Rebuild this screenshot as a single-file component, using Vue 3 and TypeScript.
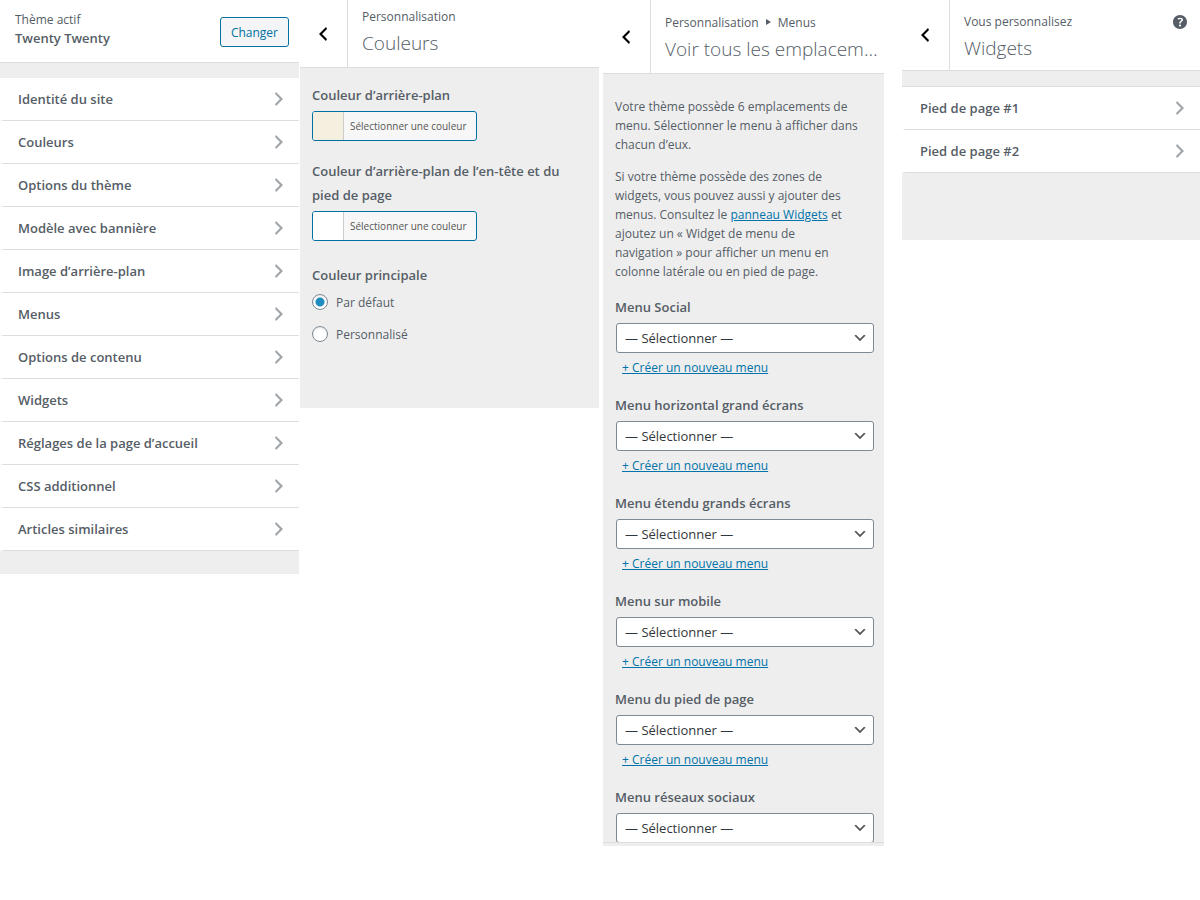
<script setup lang="ts">
import { ref } from 'vue'

const sections: string[] = [
  'Identité du site',
  'Couleurs',
  'Options du thème',
  'Modèle avec bannière',
  'Image d’arrière-plan',
  'Menus',
  'Options de contenu',
  'Widgets',
  'Réglages de la page d’accueil',
  'CSS additionnel',
  'Articles similaires',
]

interface ColorSetting {
  id: string
  label: string
  value: string
}

const colors: ColorSetting[] = [
  { id: 'background', label: 'Couleur d’arrière-plan', value: '#f5efe0' },
  { id: 'header-footer', label: 'Couleur d’arrière-plan de l’en-tête et du pied de page', value: '#ffffff' },
]

const accent = ref<'default' | 'custom'>('default')

interface MenuLocation {
  id: string
  label: string
  creatable: boolean
}

const locations: MenuLocation[] = [
  { id: 'social', label: 'Menu Social', creatable: true },
  { id: 'primary', label: 'Menu horizontal grand écrans', creatable: true },
  { id: 'expanded', label: 'Menu étendu grands écrans', creatable: true },
  { id: 'mobile', label: 'Menu sur mobile', creatable: true },
  { id: 'footer', label: 'Menu du pied de page', creatable: true },
  { id: 'networks', label: 'Menu réseaux sociaux', creatable: false },
]

const widgetAreas: string[] = ['Pied de page #1', 'Pied de page #2']
</script>

<template>
  <main class="panels">
    <section class="panel home">
      <header class="theme">
        <div class="theme-name">
          <span>Thème actif</span>
          <strong>Twenty Twenty</strong>
        </div>
        <button type="button" class="change">Changer</button>
      </header>
      <ul class="rows">
        <li v-for="name in sections" :key="name">
          <button type="button" class="row">
            <span>{{ name }}</span>
            <svg class="chevron" viewBox="0 0 20 20" aria-hidden="true"><path d="M6 15l5-5-5-5 1-2 7 7-7 7z" /></svg>
          </button>
        </li>
      </ul>
    </section>

    <section class="panel colors">
      <header class="head">
        <button type="button" class="back" aria-label="Retour">
          <svg viewBox="0 0 20 20" aria-hidden="true"><path d="M14 5l-5 5 5 5-1 2-7-7 7-7z" /></svg>
        </button>
        <div class="titles">
          <span class="crumb">Personnalisation</span>
          <h2>Couleurs</h2>
        </div>
      </header>
      <div class="color-body">
        <div v-for="color in colors" :key="color.id" class="color-setting">
          <h3 :id="color.id">{{ color.label }}</h3>
          <button type="button" class="picker" :aria-describedby="color.id">
            <span class="swatch" :style="{ backgroundColor: color.value }"></span>
            <span class="picker-text">Sélectionner une couleur</span>
          </button>
        </div>
        <fieldset class="accent">
          <legend>Couleur principale</legend>
          <label><input v-model="accent" type="radio" name="accent" value="default" />Par défaut</label>
          <label><input v-model="accent" type="radio" name="accent" value="custom" />Personnalisé</label>
        </fieldset>
      </div>
    </section>

    <section class="panel menus">
      <header class="head">
        <button type="button" class="back" aria-label="Retour">
          <svg viewBox="0 0 20 20" aria-hidden="true"><path d="M14 5l-5 5 5 5-1 2-7-7 7-7z" /></svg>
        </button>
        <div class="titles">
          <span class="crumb">Personnalisation <svg class="sep" viewBox="0 0 5 6" aria-hidden="true"><path d="M0 0l5 3-5 3z" /></svg> Menus</span>
          <h2>Voir tous les emplacem…</h2>
        </div>
      </header>
      <div class="menu-body">
        <p>Votre thème possède 6 emplacements de menu. Sélectionner le menu à afficher dans chacun d’eux.</p>
        <p>Si votre thème possède des zones de widgets, vous pouvez aussi y ajouter des menus. Consultez le <a href="#widgets">panneau Widgets</a> et ajoutez un «&nbsp;Widget de menu de navigation&nbsp;» pour afficher un menu en colonne latérale ou en pied de page.</p>
        <div v-for="place in locations" :key="place.id" class="location">
          <label :for="place.id">{{ place.label }}</label>
          <div class="select">
            <select :id="place.id">
              <option>— Sélectionner —</option>
            </select>
            <svg viewBox="0 0 20 20" aria-hidden="true"><path d="M5 6l5 5 5-5 2 1-7 7-7-7 2-1z" /></svg>
          </div>
          <a v-if="place.creatable" href="#new-menu" class="create">+ Créer un nouveau menu</a>
        </div>
      </div>
    </section>

    <section id="widgets" class="panel widgets">
      <header class="head">
        <button type="button" class="back" aria-label="Retour">
          <svg viewBox="0 0 20 20" aria-hidden="true"><path d="M14 5l-5 5 5 5-1 2-7-7 7-7z" /></svg>
        </button>
        <div class="titles">
          <span class="crumb">Vous personnalisez</span>
          <h2>Widgets</h2>
        </div>
        <button type="button" class="help" aria-label="Aide">
          <svg viewBox="0 0 20 20" aria-hidden="true"><path d="M17 10c0-3.87-3.14-7-7-7-3.87 0-7 3.13-7 7s3.13 7 7 7c3.86 0 7-3.13 7-7zm-6.3 1.48H9.14v-.43c0-.38.08-.7.24-.98s.46-.57.88-.89c.41-.29.68-.53.81-.71.14-.18.2-.39.2-.62 0-.25-.09-.44-.28-.58-.19-.13-.45-.19-.79-.19-.58 0-1.25.19-2 .57l-.64-1.28c.87-.49 1.8-.74 2.77-.74.81 0 1.45.2 1.92.58.48.39.71.91.71 1.55 0 .43-.09.8-.29 1.11-.19.32-.57.67-1.11 1.06-.38.28-.61.49-.71.63-.1.15-.15.34-.15.57v.35zm-1.47 2.74c-.18-.17-.27-.42-.27-.73 0-.33.08-.58.26-.75s.43-.25.77-.25c.32 0 .57.09.75.26s.27.42.27.74c0 .3-.09.55-.27.72-.18.18-.43.27-.75.27-.33 0-.58-.09-.76-.26z" /></svg>
        </button>
      </header>
      <ul class="rows">
        <li v-for="name in widgetAreas" :key="name">
          <button type="button" class="row">
            <span>{{ name }}</span>
            <svg class="chevron" viewBox="0 0 20 20" aria-hidden="true"><path d="M6 15l5-5-5-5 1-2 7 7-7 7z" /></svg>
          </button>
        </li>
      </ul>
    </section>
  </main>
</template>

<style>
body {
  background: #fff;
}
</style>

<style scoped>
.panels {
  display: grid;
  grid-template-columns: 299fr 1fr 299fr 4fr 281fr 18fr 298fr;
  align-items: start;
  font-family: "Segoe UI", "Open Sans", "Noto Sans", sans-serif;
  font-size: 12px;
  line-height: 19px;
  color: #555d66;
}
.panel {
  min-width: 0;
  background: #eee;
}
.home { grid-column: 1; padding-bottom: 23px; }
.colors { grid-column: 3; }
.menus { grid-column: 5; padding-bottom: 3px; }
.widgets { grid-column: 7; padding-bottom: 67px; }

button {
  font-family: inherit;
  cursor: pointer;
}
a { color: #0073aa; }
svg {
  display: block;
  width: 20px;
  height: 20px;
  fill: currentColor;
}

.theme {
  display: flex;
  align-items: center;
  justify-content: space-between;
  height: 60px;
  padding: 2px 10px 0 15px;
  border-bottom: 1px solid #ddd;
  background: #fff;
}
.theme-name {
  display: flex;
  flex-direction: column;
  line-height: 18px;
  padding-bottom: 6px;
}
strong, h3, legend, .location label {
  font-size: 13px;
  font-weight: 600;
}
.change {
  height: 30px;
  padding: 0 10px;
  border: 1px solid #0071a1;
  border-radius: 3px;
  background: #f3f5f6;
  color: #0071a1;
  font-size: 12px;
}

.rows {
  list-style: none;
  margin: 15px 0 0;
  padding: 0;
}
.widgets .rows { border-top: 1px solid #ddd; }
.row {
  display: flex;
  align-items: center;
  justify-content: space-between;
  width: 100%;
  height: 43px;
  padding: 0 10px 0 14px;
  border: 0 solid #ddd;
  border-bottom-width: 1px;
  border-left: 4px solid #fff;
  background: #fff;
  color: #555d66;
  font-size: 13px;
  font-weight: 600;
  text-align: left;
}
.chevron { color: #a0a5aa; }

.head {
  display: flex;
  border-bottom: 1px solid #ddd;
  background: #fff;
}
.back {
  display: flex;
  align-items: center;
  justify-content: center;
  flex: none;
  width: 48px;
  padding: 0 2px 0 0;
  border: 0;
  border-right: 1px solid #ddd;
  background: #fff;
  color: #000;
}
.titles {
  flex: 1;
  min-width: 0;
  padding: 7px 4px 11px 14px;
}
.crumb { display: block; }
h2 {
  margin: 4px 0 0;
  font-size: 19px;
  font-weight: 300;
  line-height: 26px;
  white-space: nowrap;
}
.sep {
  display: inline-block;
  width: 5px;
  height: 6px;
  margin: 0 4px;
  vertical-align: 2px;
}
.menus .titles { padding-top: 13px; }
.widgets .titles { padding-top: 12px; padding-bottom: 9px; }
.help {
  align-self: flex-start;
  padding: 0;
  margin: 12px 10px 0 0;
  border: 0;
  background: none;
  color: #555d66;
}

.color-body { padding: 15px 12px 54px; }
.color-setting { margin-bottom: 18px; }
h3 {
  margin: 0 0 4px;
  line-height: 24px;
}
.picker {
  display: inline-flex;
  height: 30px;
  padding: 0;
  overflow: hidden;
  border: 1px solid #0071a1;
  border-radius: 3px;
  background: #f7f7f7;
  color: #555;
  font-size: 10px;
  line-height: 28px;
  vertical-align: top;
}
.swatch {
  width: 30px;
  height: 28px;
  border-right: 1px solid #ccc;
}
.picker-text { padding: 0 10px 0 6px; }
.accent {
  margin: 0;
  padding: 0;
  border: 0;
}
legend {
  padding: 4px 0 3px;
  line-height: 24px;
}
.accent label {
  display: flex;
  align-items: center;
  gap: 8px;
  height: 24px;
  margin-bottom: 8px;
}
.accent input {
  appearance: none;
  width: 16px;
  height: 16px;
  margin: 0;
  border: 1px solid #7e8993;
  border-radius: 50%;
  background: #fff;
  box-shadow: inset 0 1px 2px rgba(0, 0, 0, 0.1);
}
.accent input:checked {
  background: radial-gradient(circle, #1e8cbe 4px, #fff 5px);
}

.menu-body {
  max-height: 769px;
  overflow: hidden;
  padding: 23px 10px 0 12px;
  box-sizing: border-box;
  border-bottom: 1px solid #ddd;
}
.menu-body p {
  margin: 0 0 13px;
  padding-right: 13px;
}
.location { margin: 14px 0 16px; }
.location label {
  display: block;
  line-height: 24px;
}
.select {
  display: grid;
  align-items: center;
  margin: 4px 0 5px 1px;
}
.select > * { grid-area: 1 / 1; }
.select select {
  appearance: none;
  width: 100%;
  height: 30px;
  padding: 0 24px 0 8px;
  border: 1px solid #7e8993;
  border-radius: 3px;
  background: #fff;
  color: #32373c;
  font: inherit;
  font-size: 13px;
}
.select svg {
  justify-self: end;
  width: 16px;
  height: 16px;
  margin-right: 6px;
  color: #555;
  pointer-events: none;
}
.create { display: inline-block; margin-left: 7px; }
</style>
